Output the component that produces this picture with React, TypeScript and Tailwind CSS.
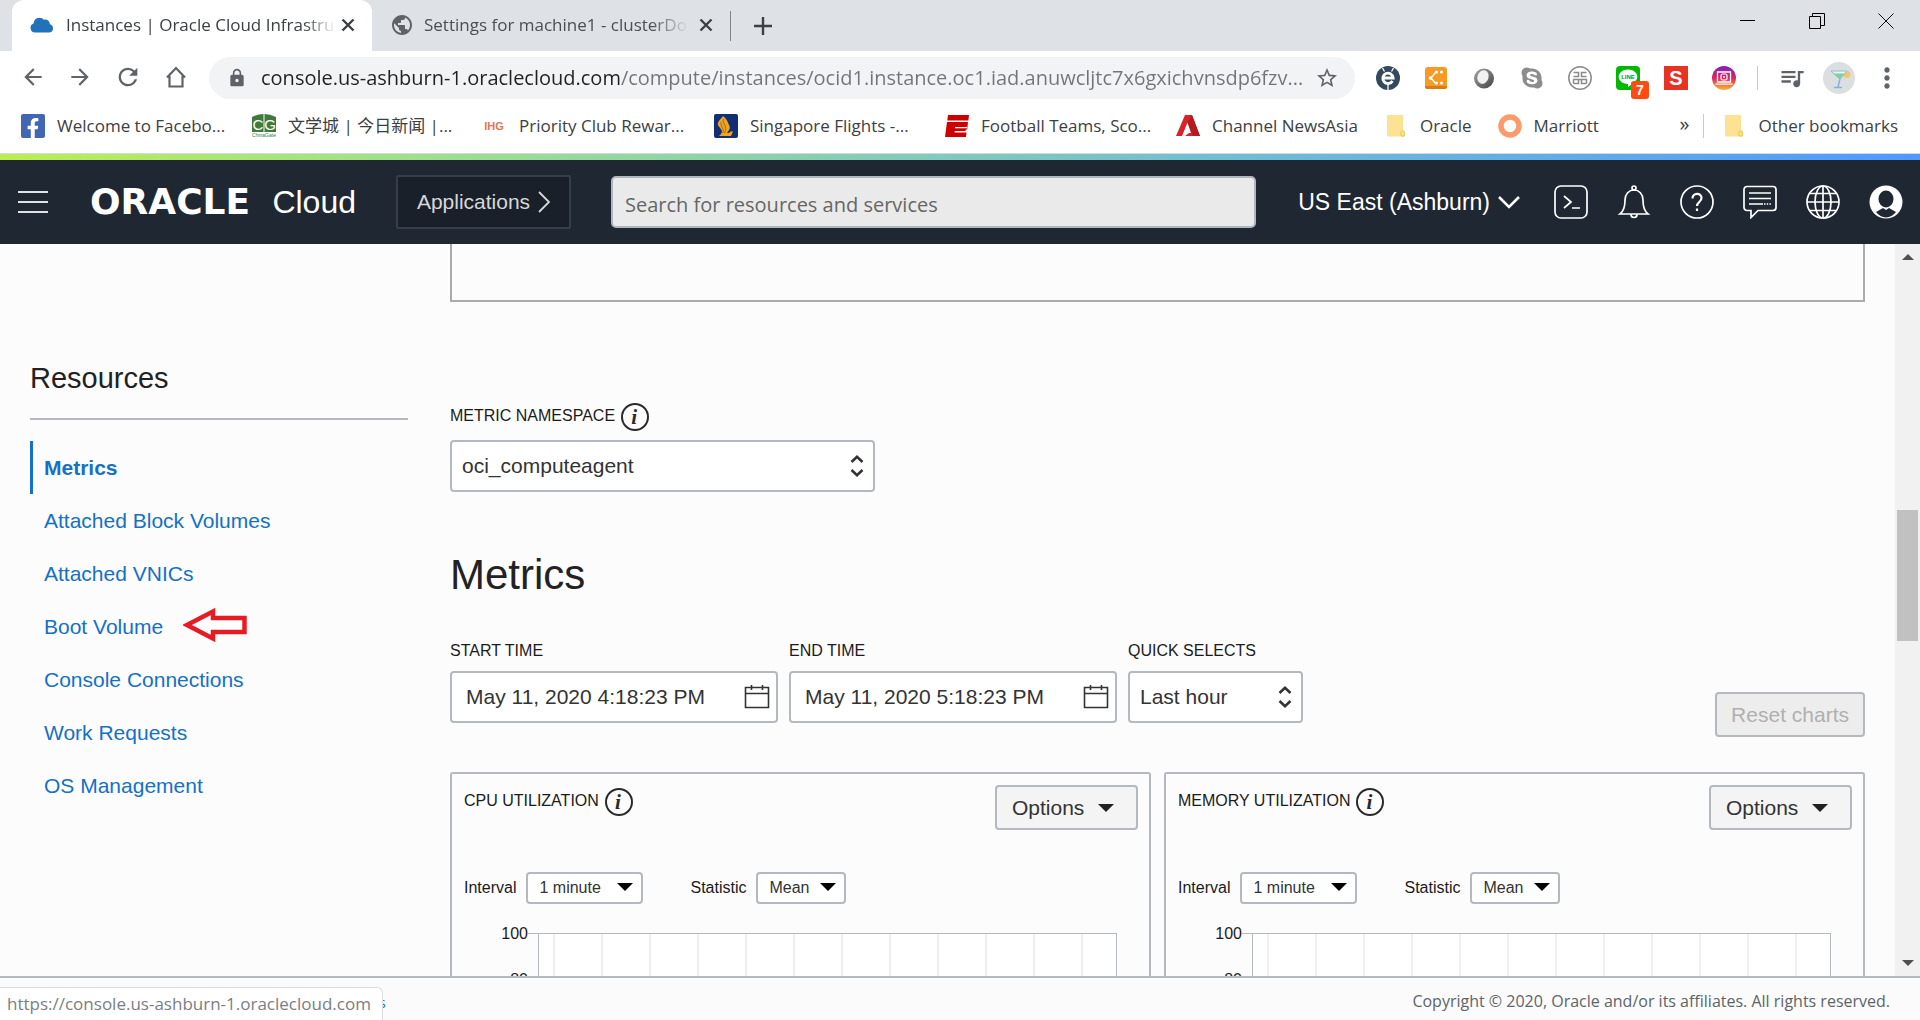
import type { ReactNode } from "react";
import { FaFacebookF, FaSkype } from "react-icons/fa";
import {
  MdArrowBack,
  MdArrowForward,
  MdLock,
  MdMoreVert,
  MdPublic,
  MdQueueMusic,
  MdRefresh,
  MdStarBorder,
} from "react-icons/md";

/* ---------- Browser chrome ---------- */

function CloseGlyph() {
  return (
    <svg viewBox="0 0 14 14" className="size-[14px]" fill="none" stroke="#3c4043" strokeWidth="2.4">
      <path d="M1.5 1.5l11 11M12.5 1.5l-11 11" />
    </svg>
  );
}

function TabStrip() {
  return (
    <div className="flex h-[51px] shrink-0 items-stretch bg-[#dee1e6] pl-3">
      <div className="flex w-[360px] items-center rounded-t-xl bg-white pb-0.5 pl-[18px] text-[#3c4043]">
        <svg viewBox="0 0 24 16" className="h-4 w-6 shrink-0" fill="#2272b9">
          <path d="M5 15.500a4.700 4.700 0 0 1-1.400-9.100A6 6 0 0 1 14 2.700a4.500 4.500 0 0 1 5.800 4.600A4.200 4.200 0 0 1 19.600 15.500Z" />
        </svg>
        <span className="ml-3 w-[270px] overflow-hidden whitespace-nowrap text-[17px] leading-6 [mask-image:linear-gradient(90deg,#000_88%,transparent)]">
          Instances | Oracle Cloud Infrastru
        </span>
        <button aria-label="Close tab" className="ml-[5px]">
          <CloseGlyph />
        </button>
      </div>
      <div className="flex w-[358px] items-center pb-0.5 pl-[18px] text-[#4b4f54]">
        <MdPublic className="size-6 shrink-0 text-[#5f6368]" />
        <span className="ml-[10px] w-[270px] overflow-hidden whitespace-nowrap text-[17px] leading-6 [mask-image:linear-gradient(90deg,#000_84%,transparent_98%)]">
          Settings for machine1 - clusterDo
        </span>
        <button aria-label="Close tab" className="ml-[5px]">
          <CloseGlyph />
        </button>
      </div>
      <div className="my-auto h-[30px] w-px bg-[#808388]" />
      <button aria-label="New tab" className="ml-[23px]">
        <svg viewBox="0 0 18 18" className="size-[18px]" stroke="#3c4043" strokeWidth="2.400">
          <path d="M9 0v18M0 9h18" />
        </svg>
      </button>
      <div className="mb-[9px] ml-auto flex items-center gap-[53px] pr-[26px]">
        <button aria-label="Minimize">
          <svg viewBox="0 0 16 16" className="size-4" fill="none" stroke="#000">
            <path d="M0 7.500h15" />
          </svg>
        </button>
        <button aria-label="Restore">
          <svg viewBox="0 0 16 16" className="size-4" fill="none" stroke="#000">
            <path d="M.5 3.500h11v12h-11zM3.500 3.500v-3h12v12h-4" />
          </svg>
        </button>
        <button aria-label="Close window">
          <svg viewBox="0 0 16 16" className="size-4" fill="none" stroke="#111">
            <path d="M.5.5l15 15M15.500.5l-15 15" />
          </svg>
        </button>
      </div>
    </div>
  );
}

function Extension({ name, children }: { name: string; children: ReactNode }) {
  return (
    <button aria-label={name} className="relative size-6 shrink-0">
      {children}
    </button>
  );
}

function Extensions() {
  return (
    <div className="flex items-center gap-6">
      <Extension name="Explorer">
        <svg viewBox="0 0 24 24" className="size-6">
          <circle cx="12" cy="12" r="12" fill="#34495e" />
          <path d="M6.500 2l2 3.500M17.500 2l-2 3.500M12 19v5" stroke="#fff" strokeWidth="1.300" />
          <path d="M16.500 15a5.200 5.200 0 1 1 .7-3H7" fill="none" stroke="#fff" strokeWidth="2.800" />
        </svg>
      </Extension>
      <Extension name="Connections">
        <svg viewBox="0 0 24 24" className="size-6">
          <rect x="1" y="1" width="22" height="22" rx="3" fill="#f59a22" />
          <path d="M1 20h22v1a2 2 0 0 1-2 2H3a2 2 0 0 1-2-2z" fill="#d97d10" />
          <path d="M12 6l-5 6 5 6" fill="none" stroke="#fff" strokeWidth="1.400" />
          <g fill="#fff">
            <circle cx="6.500" cy="12" r="1.800" />
            <circle cx="12.500" cy="6" r="1.600" />
            <circle cx="17.500" cy="6" r="1.600" />
            <circle cx="12.500" cy="17" r="1.600" />
            <circle cx="17.500" cy="17" r="1.600" />
          </g>
        </svg>
      </Extension>
      <Extension name="Lens">
        <svg viewBox="0 0 24 24" className="size-6">
          <defs>
            <linearGradient id="lens" x1="0" y1="0" x2="1" y2="1">
              <stop offset="0" stopColor="#a5a5a5" />
              <stop offset="1" stopColor="#444" />
            </linearGradient>
          </defs>
          <circle cx="12" cy="12.500" r="10" fill="url(#lens)" />
          <ellipse cx="11" cy="11" rx="5.500" ry="7" fill="#f1f1f1" transform="rotate(20 11 11)" />
        </svg>
      </Extension>
      <Extension name="Skype">
        <FaSkype className="size-6 text-[#8c8c8c]" />
      </Extension>
      <Extension name="Seal">
        <svg viewBox="0 0 24 24" className="size-6" fill="none" stroke="#8a8a8a" strokeWidth="1.500">
          <circle cx="12" cy="12" r="11.200" />
          <path d="M5.500 6.500h5v4h-5M18.500 6.500h-5v4h5M5 13.500h14M5.500 17.500h5v-4M18.500 17.500h-5v-4M5.500 13.500v4M18.500 13.500v4" />
        </svg>
      </Extension>
      <Extension name="LINE">
        <svg viewBox="0 0 24 24" className="size-6">
          <rect width="24" height="24" rx="4" fill="#00b900" />
          <path d="M12 3.500c5.200 0 9.300 3.300 9.300 7.300 0 3.700-4.600 7.300-9.300 10.200.3-1.700.2-2.700-.4-2.900C6.500 17.800 2.700 14.700 2.700 10.800c0-4 4.100-7.300 9.300-7.300z" fill="#fff" />
          <text x="12" y="13" textAnchor="middle" fontSize="6" fontWeight="700" fill="#00a000" fontFamily="Liberation Sans">LINE</text>
        </svg>
        <span className="absolute top-[15px] left-[15px] flex size-[18px] items-center justify-center rounded-[3px] bg-[#ff4a12] font-['Liberation_Sans'] text-sm font-bold text-white">
          7
        </span>
      </Extension>
      <Extension name="S">
        <span className="flex size-6 items-center justify-center bg-[#e63322] font-['Liberation_Sans'] text-xl font-bold text-white">
          S
        </span>
      </Extension>
      <Extension name="Desktop for Instagram">
        <svg viewBox="0 0 24 24" className="size-6" fill="none">
          <defs>
            <linearGradient id="insta" x1="0" y1="0" x2="0" y2="1">
              <stop offset="0" stopColor="#7a22b8" />
              <stop offset=".5" stopColor="#e0245e" />
              <stop offset="1" stopColor="#fdb52e" />
            </linearGradient>
          </defs>
          <circle cx="12" cy="12" r="12" fill="url(#insta)" />
          <path d="M5.500 6h13v10h-13zM3.500 18.200h17" stroke="#fff" strokeWidth="1.300" />
          <rect x="9" y="8" width="6" height="6" rx="1.500" stroke="#fff" strokeWidth="1.200" />
          <circle cx="12" cy="11" r="1" fill="#fff" />
        </svg>
      </Extension>
    </div>
  );
}

function Toolbar() {
  return (
    <div className="flex h-[54px] shrink-0 items-center bg-white pl-5 text-[#5f6368]">
      <nav className="mb-0.5 flex items-center gap-[21px]">
        <button aria-label="Back"><MdArrowBack className="size-[26px]" /></button>
        <button aria-label="Forward"><MdArrowForward className="size-[26px]" /></button>
        <button aria-label="Reload"><MdRefresh className="size-[28px]" /></button>
        <button aria-label="Home">
          <svg viewBox="0 0 26 26" className="size-[26px]" fill="none" stroke="#5f6368" strokeWidth="2.200">
            <path d="M4 13.500L13 4l9 9.500M6.500 12v10.500h13V12" />
          </svg>
        </button>
      </nav>
      <div className="ml-5 flex h-[42px] min-w-0 flex-1 items-center rounded-full bg-[#f1f3f4] pr-4 pl-[18px]">
        <MdLock className="size-5 shrink-0" />
        <input
          aria-label="Address"
          readOnly
          value="console.us-ashburn-1.oraclecloud.com/compute/instances/ocid1.instance.oc1.iad.anuwcljtc7x6gxichvnsdp6fzv..."
          className="ml-3.5 min-w-0 flex-1 bg-[linear-gradient(90deg,#202124_360px,#70757a_360px)] bg-clip-text text-[20px] leading-7 text-transparent outline-none"
        />
        <button aria-label="Bookmark this page"><MdStarBorder className="size-6" /></button>
      </div>
      <div className="ml-[21px]">
        <Extensions />
      </div>
      <div className="ml-[21px] h-6 w-px bg-[#c8cacd]" />
      <button aria-label="Media" className="ml-5"><MdQueueMusic className="size-7" /></button>
      <button aria-label="Profile" className="ml-[17px]">
        <svg viewBox="0 0 32 32" className="size-8">
          <circle cx="16" cy="16" r="16" fill="#dcdfe0" />
          <circle cx="24" cy="12.500" r="3.500" fill="#f5c66e" />
          <path d="M8 9h16l-7 8z" fill="#e8f6f3" stroke="#8eb9dc" />
          <path d="M10 11.500h12L16.500 17z" fill="#7fcf9f" />
          <path d="M17 17l-2 8M11 25.500h8" stroke="#7fb2e2" strokeWidth="1.500" />
        </svg>
      </button>
      <button aria-label="Menu" className="mr-[17px] ml-4"><MdMoreVert className="size-8" /></button>
    </div>
  );
}

function Folder() {
  return (
    <svg viewBox="0 0 24 24" className="size-6" fill="#fde293">
      <path d="M3 1h16v16h1.500v5.500H4a1 1 0 0 1-1-1z" />
      <path d="M17 22v-3.500a1.700 1.700 0 0 1 3.400 0V22z" stroke="#e8c64e" />
    </svg>
  );
}

const bookmarks: { label: string; fixed: boolean; icon: ReactNode }[] = [
  {
    label: "Welcome to Facebo...",
    fixed: true,
    icon: (
      <span className="flex size-6 items-end justify-end rounded-xs bg-[#4267b2] pr-0.5 text-white">
        <FaFacebookF className="size-5" />
      </span>
    ),
  },
  {
    label: "文学城 | 今日新闻 |...",
    fixed: true,
    icon: (
      <svg viewBox="0 0 24 24" className="size-6" fontFamily="Liberation Sans">
        <path d="M0 3q6-3 11.500-3v18H0zM12.500 0Q18 0 24 3v15H12.500z" fill="#3f7a3c" />
        <text x="6" y="16" textAnchor="middle" fontSize="15" fill="#fff">C</text>
        <text x="18" y="16" textAnchor="middle" fontSize="15" fill="#fff">G</text>
        <text x="12" y="23" textAnchor="middle" fontSize="5" fill="#3f7a3c">ChinaGate</text>
      </svg>
    ),
  },
  {
    label: "Priority Club Rewar...",
    fixed: true,
    icon: (
      <svg viewBox="0 0 24 24" className="size-6">
        <text x="11" y="16" textAnchor="middle" fontSize="11" fontWeight="700" fill="#e0764f" fontFamily="Liberation Sans">IHG</text>
      </svg>
    ),
  },
  {
    label: "Singapore Flights -...",
    fixed: true,
    icon: (
      <svg viewBox="0 0 24 24" className="size-6">
        <rect width="24" height="24" rx="2" fill="#122e74" />
        <path d="M9 2c-3 4-6 6-5 9 1 3 6 5 3 9l-2 2h12l2-4.500h-2.500L15 19h-2c4-5 3-6 1.500-9C13.500 7 12 4 9 2z" fill="#f0a51e" />
        <path d="M9.500 5c-2 4 5 7 1 14M7 8c-1 4 4 7 1.500 11" fill="none" stroke="#8a5a20" strokeWidth=".8" />
      </svg>
    ),
  },
  {
    label: "Football Teams, Sco...",
    fixed: true,
    icon: (
      <svg viewBox="0 0 24 24" className="size-6" fill="#cc0000">
        <path d="M3 1h21l-.6 5.500H2.300zM2 8h21l-.8 7.500H21l-.6 1.500H9.800l-.2 1.500H21.500L21 23H0z" />
        <path d="M10 13h12.200l-.2 1.200H9.900z" fill="#fff" />
      </svg>
    ),
  },
  {
    label: "Channel NewsAsia",
    fixed: false,
    icon: (
      <svg viewBox="0 0 24 24" className="size-6">
        <path d="M9 1h7l8 21H9l4-3h2L11.500 8.500 6 22H0z" fill="#d8232a" />
        <path d="M16 1l8 21h-7L11.500 8.500z" fill="#b01c22" />
      </svg>
    ),
  },
  { label: "Oracle", fixed: false, icon: <Folder /> },
  {
    label: "Marriott",
    fixed: false,
    icon: (
      <svg viewBox="0 0 24 24" className="size-6" fill="none">
        <circle cx="12" cy="12" r="9" stroke="#fb9a6b" strokeWidth="5.500" />
      </svg>
    ),
  },
];

function BookmarksBar() {
  return (
    <div className="flex h-[49px] shrink-0 items-center border-b border-[#d5d8dc] bg-white pr-[22px] pl-[21px] pb-1.5 text-[17px] leading-6 text-[#3c4043]">
      <div className="flex items-center gap-[26px] whitespace-nowrap">
        {bookmarks.map((b) => (
          <a key={b.label} href="#" className="flex items-center gap-3">
            {b.icon}
            <span className={b.fixed ? "w-[169px]" : ""}>{b.label}</span>
          </a>
        ))}
      </div>
      <button aria-label="More bookmarks" className="mb-1 ml-auto text-xl leading-6">»</button>
      <div className="mr-[18px] ml-[14px] h-6 w-px bg-[#c8cacd]" />
      <a href="#" className="flex items-center gap-3 whitespace-nowrap">
        <Folder />
        Other bookmarks
      </a>
    </div>
  );
}

/* ---------- Console header ---------- */

function HeaderIcon({ name, children }: { name: string; children: ReactNode }) {
  return (
    <button aria-label={name}>
      <svg viewBox="0 0 34 34" className="size-[34px]" fill="none" stroke="#fff" strokeWidth="1.700">
        {children}
      </svg>
    </button>
  );
}

function ConsoleHeader() {
  return (
    <header className="shrink-0 font-['Liberation_Sans',Arial,sans-serif]">
      <div className="h-1.5 bg-linear-to-r from-[#b9ee4f] to-[#4f99ff]" />
      <div className="flex h-[84px] items-center bg-[#1e2732] pr-[17px] pl-[18px] text-white">
        <button aria-label="Open navigation menu" className="flex w-[30px] shrink-0 flex-col gap-2">
          <span className="h-0.5 bg-[#dfe1e4]" />
          <span className="h-0.5 bg-[#dfe1e4]" />
          <span className="h-0.5 bg-[#dfe1e4]" />
        </button>
        <a href="#" className="ml-[42px] flex w-[266px] shrink-0 items-center justify-between leading-10">
          <span className="font-['DejaVu_Sans'] text-[36px] font-bold">ORACLE</span>
          <span className="text-[32px]">Cloud</span>
        </a>
        <button className="ml-10 flex h-[54px] w-[175px] shrink-0 items-center justify-center gap-2 rounded-xs border-2 border-[#363e48] bg-[#19202a] text-[21px] text-[#d6d8da]">
          Applications
          <svg viewBox="0 0 12 24" className="h-6 w-3" fill="none" stroke="#d6d8da" strokeWidth="1.800">
            <path d="M1 2l10 10L1 22" />
          </svg>
        </button>
        <input
          aria-label="Search for resources and services"
          placeholder="Search for resources and services"
          className="ml-10 h-[52px] min-w-0 flex-1 rounded-[5px] border-2 border-[#b0b6bf] bg-[#eaeaea] px-3 pt-1 font-['Open_Sans',sans-serif] text-[20px] text-[#333] placeholder:text-[#666]"
        />
        <button className="ml-[42px] flex items-center gap-2 text-[23px] whitespace-nowrap">
          US East (Ashburn)
          <svg viewBox="0 0 22 14" className="h-3.5 w-[22px]" fill="none" stroke="#fff" strokeWidth="2.600">
            <path d="M1 2l10 10L21 2" />
          </svg>
        </button>
        <div className="ml-[34px] flex gap-[29px]">
          <HeaderIcon name="Cloud Shell">
            <rect x="1" y="1" width="32" height="32" rx="6" />
            <path d="M10 11l7 6-7 6M18 23h8" />
          </HeaderIcon>
          <HeaderIcon name="Announcements">
            <path d="M3 29c4-3 5-8 5-14 0-6 4-10 9-10s9 4 9 10c0 6 1 11 5 14zM14 29.500a3 3 0 0 0 6 0" />
            <circle cx="17" cy="3" r="2" />
          </HeaderIcon>
          <HeaderIcon name="Help">
            <circle cx="17" cy="17" r="16" />
            <path d="M12.500 13.500c0-6 9-6 9-.5 0 4-4.500 4-4.500 8M17 23.500v2.500" strokeWidth="2.200" />
          </HeaderIcon>
          <HeaderIcon name="Chat">
            <path d="M4 1.500h26a3 3 0 0 1 3 3v18a3 3 0 0 1-3 3H15l-7 7v-7H4a3 3 0 0 1-3-3v-18a3 3 0 0 1 3-3zM6 8h22M6 13.500h22M6 19h14" />
            <path d="M21 19h8" strokeDasharray="1.500 1.200" />
          </HeaderIcon>
          <HeaderIcon name="Language">
            <circle cx="17" cy="17" r="16" />
            <ellipse cx="17" cy="17" rx="8" ry="16" />
            <path d="M17 1v32M1 17h32M4 8.500h26M4 25.500h26" />
          </HeaderIcon>
          <HeaderIcon name="Profile">
            <circle cx="17" cy="17" r="16.500" fill="#fff" stroke="none" />
            <ellipse cx="17" cy="14" rx="7.500" ry="8.500" fill="#1e2732" stroke="none" />
            <path d="M14 23l-7 4q4 5 10 5.500 6-.5 10-5.500l-7-4-3 2z" fill="#1e2732" stroke="none" />
          </HeaderIcon>
        </div>
      </div>
    </header>
  );
}

/* ---------- Page content ---------- */

function Info({ topic }: { topic: string }) {
  return (
    <button
      aria-label={`About ${topic}`}
      className="flex size-7 items-center justify-center rounded-full border-2 border-[#2a2a2a] pr-0.5 font-['Liberation_Serif',serif] text-[21px] leading-none font-bold text-[#2a2a2a] italic"
    >
      i
    </button>
  );
}

function UpDown() {
  return (
    <svg viewBox="0 0 14 22" className="pointer-events-none absolute top-1/2 right-[11px] h-[22px] w-3.5 -translate-y-1/2" fill="none" stroke="#333" strokeWidth="2.600">
      <path d="M1.500 7L7 1.800 12.500 7M1.500 15L7 20.200 12.500 15" />
    </svg>
  );
}

function Triangle({ className }: { className: string }) {
  return (
    <svg viewBox="0 0 16 8" className={className} fill="currentColor">
      <path d="M0 0h16L8 8z" />
    </svg>
  );
}

function DateField({ id, label, value }: { id: string; label: string; value: string }) {
  return (
    <div className="mb-3.5 w-[328px]">
      <label htmlFor={id} className="block text-base leading-5 text-[#1b1b1b]">{label}</label>
      <div className="relative mt-2.5">
        <input
          id={id}
          defaultValue={value}
          className="block h-[52px] w-full rounded-[4px] border-2 border-[#b4b8bf] bg-white pl-3.5 text-[21px] text-[#333]"
        />
        <button aria-label={`Choose ${label.toLowerCase()}`} className="absolute top-3.5 right-2">
          <svg viewBox="0 0 26 24" className="h-6 w-[26px]" fill="none" stroke="#333" strokeWidth="1.600">
            <path d="M1.500 2.500h23v20h-23zM1.500 8.500h23M7.500 0v5M18.500 0v5" />
          </svg>
        </button>
      </div>
    </div>
  );
}

function SmallSelect({ id, label, value, width }: { id: string; label: string; value: string; width: string }) {
  return (
    <div className="flex items-center gap-2.5">
      <label htmlFor={id} className="text-base text-[#1b1b1b]">{label}</label>
      <div className="relative">
        <select id={id} className={`${width} block h-8 appearance-none rounded-[4px] border-2 border-[#b4b8bf] bg-white pl-[11px] text-base text-[#333]`}>
          <option>{value}</option>
        </select>
        <Triangle className="pointer-events-none absolute top-[11px] right-2.5 h-2 w-4 text-black" />
      </div>
    </div>
  );
}

const gridLines = [15, 63, 111, 159, 207, 255, 303, 351, 399, 447, 495, 543];

function MetricCard({ id, title }: { id: string; title: string }) {
  return (
    <section className="rounded-t-[3px] border-x-2 border-t-2 border-[#b4b8bf] px-3 pt-[11px]">
      <div className="-mr-px flex items-start justify-between">
        <div className="mt-[3px] flex items-start gap-1.5">
          <h2 className="text-base leading-[26px] text-[#1b1b1b]">{title}</h2>
          <Info topic={title} />
        </div>
        <button className="flex h-[45px] w-[143px] items-center justify-between rounded-[4px] border-2 border-[#b4b8bf] bg-[#f4f4f4] pr-[22px] pl-[15px] text-[21px] text-[#333]">
          Options
          <Triangle className="h-2 w-4 text-[#222]" />
        </button>
      </div>
      <div className="mt-[42px] flex gap-[47px]">
        <SmallSelect id={`${id}-interval`} label="Interval" value="1 minute" width="w-[117px]" />
        <SmallSelect id={`${id}-statistic`} label="Statistic" value="Mean" width="w-[90px]" />
      </div>
      <div className="mt-5 flex pr-5">
        <div className="flex w-16 flex-col items-end gap-[26px] text-base leading-5 text-[#1b1b1b]">
          <span>100</span>
          <span>80</span>
        </div>
        <div className="mt-[9px] w-2.5 border-t border-[#b4b8bf]" />
        <svg viewBox="0 0 577 200" preserveAspectRatio="none" className="mt-[9px] h-[200px] min-w-0 flex-1 border border-[#b4b8bf] bg-white">
          {gridLines.map((x) => (
            <path key={x} d={`M${x} 0v200`} stroke="#dcdde0" strokeWidth="1" vectorEffect="non-scaling-stroke" />
          ))}
        </svg>
      </div>
    </section>
  );
}

const resources = [
  "Metrics",
  "Attached Block Volumes",
  "Attached VNICs",
  "Boot Volume",
  "Console Connections",
  "Work Requests",
  "OS Management",
];

function Sidebar() {
  return (
    <aside className="w-[378px] shrink-0 pt-[116px]">
      <h2 className="text-[29px] leading-9 text-[#222]">Resources</h2>
      <ul className="mt-[22px] border-t-2 border-[#b4b8bf] pt-[21px] text-[21px] text-[#1471c4]">
        {resources.map((r, i) => (
          <li key={r} className={i === 0 ? "border-l-3 border-[#1471c4] pl-[11px] font-bold" : "pl-3.5"}>
            <div className="flex h-[53px] items-center">
              <a href="#">{r}</a>
              {r === "Boot Volume" && (
                <svg viewBox="0 0 64 34" className="mb-1 ml-5 h-[34px] w-16" fill="#fff" stroke="#e61c24" strokeWidth="4.500">
                  <path d="M4 17L30 3.500v6.500h31.500v14H30v6.500z" />
                </svg>
              )}
            </div>
          </li>
        ))}
      </ul>
    </aside>
  );
}

function Scrollbar() {
  return (
    <div aria-hidden="true" className="flex w-[25px] shrink-0 flex-col items-center justify-between bg-[#f1f1f1] pt-2.5 pb-2.5 text-[#505050]">
      <Triangle className="h-1.5 w-3 rotate-180" />
      <div className="mt-[106px] h-[131px] w-[21px] bg-[#c1c1c1]" />
      <div className="flex h-[181px] items-end">
        <Triangle className="h-1.5 w-3" />
      </div>
    </div>
  );
}

function Content() {
  return (
    <div className="flex min-h-0 flex-1 overflow-hidden bg-[#fcfcfc] font-['Liberation_Sans',Arial,sans-serif]">
      <div className="flex min-w-0 flex-1 gap-[42px] overflow-hidden px-[30px]">
        <Sidebar />
        <main className="min-w-0 flex-1">
          <div className="h-[58px] border-x-2 border-b-2 border-[#ababab]" />
          <div className="mt-[101px] flex items-start gap-1.5">
            <label htmlFor="namespace" className="text-base leading-[26px] text-[#1b1b1b]">METRIC NAMESPACE</label>
            <Info topic="metric namespace" />
          </div>
          <div className="relative mt-[9px] w-[425px]">
            <select id="namespace" className="block h-[52px] w-full appearance-none rounded-[4px] border-2 border-[#b4b8bf] bg-white pl-2.5 text-[21px] text-[#333]">
              <option>oci_computeagent</option>
            </select>
            <UpDown />
          </div>
          <h1 className="mt-[59px] text-[42px] leading-[48px] text-[#222]">Metrics</h1>
          <div className="mt-[42px] flex items-end gap-[11px]">
            <DateField id="start" label="START TIME" value="May 11, 2020 4:18:23 PM" />
            <DateField id="end" label="END TIME" value="May 11, 2020 5:18:23 PM" />
            <div className="mb-3.5 w-[175px]">
              <label htmlFor="quick" className="block text-base leading-5 text-[#1b1b1b]">QUICK SELECTS</label>
              <div className="relative mt-2.5">
                <select id="quick" className="block h-[52px] w-full appearance-none rounded-[4px] border-2 border-[#b4b8bf] bg-white pl-2.5 text-[21px] text-[#333]">
                  <option>Last hour</option>
                </select>
                <UpDown />
              </div>
            </div>
            <button disabled className="ml-auto h-[45px] rounded-[4px] border-2 border-[#b4b8bf] bg-[#ededed] px-3.5 text-[21px] text-[#b0b0b0]">
              Reset charts
            </button>
          </div>
          <div className="mt-[35px] grid grid-cols-2 gap-[13px]">
            <MetricCard id="cpu" title="CPU UTILIZATION" />
            <MetricCard id="memory" title="MEMORY UTILIZATION" />
          </div>
        </main>
      </div>
      <Scrollbar />
    </div>
  );
}

function Footer() {
  return (
    <footer className="relative flex h-11 shrink-0 items-center justify-between border-t-2 border-[#b4b8bf] bg-[#fbfbfc] pr-[30px] pl-[379px] text-base text-[#606468]">
      <a href="#" className="mt-2 text-sm text-[#1471c4]">s</a>
      <p className="mt-1 whitespace-nowrap">Copyright © 2020, Oracle and/or its affiliates. All rights reserved.</p>
      <div className="absolute bottom-0 left-0 flex h-[33px] w-[383px] items-center rounded-tr-md border-t border-r border-[#dadce0] bg-white pl-[7px] text-[17px] whitespace-nowrap text-[#7a7e83]">
        https://console.us-ashburn-1.oraclecloud.com
      </div>
    </footer>
  );
}

export default function App() {
  return (
    <div className="flex h-screen flex-col overflow-hidden bg-white font-['Open_Sans','Noto_Sans_CJK_SC',sans-serif]">
      <TabStrip />
      <Toolbar />
      <BookmarksBar />
      <ConsoleHeader />
      <Content />
      <Footer />
    </div>
  );
}
